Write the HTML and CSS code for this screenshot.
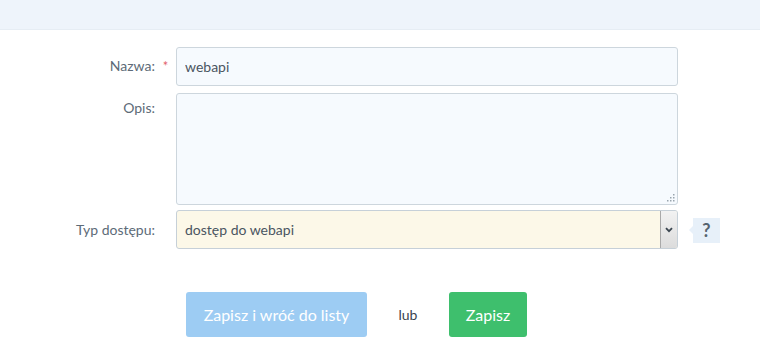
FILE: index.html
```html
<!DOCTYPE html>
<html lang="pl">
<head>
    <meta charset="UTF-8">
    <title>Edycja klucza</title>
    <link rel="stylesheet" href="styles.css">
</head>
<body>
    <div class="topbar"></div>

    <form class="form">
        <!-- nazwa -->
        <div class="row row-name">
            <label class="label">Nazwa:<span class="req">*</span></label>
            <input class="field" type="text" value="webapi">
        </div>

        <!-- opis -->
        <div class="row row-desc">
            <label class="label label-top">Opis:<span class="req"></span></label>
            <div class="area-wrap">
                <textarea class="field area"></textarea>
                <span class="grip">
                    <svg width="8" height="8" viewBox="0 0 8 8">
                        <rect x="6" y="0" width="1.5" height="1.5" fill="#9aa5ae"/>
                        <rect x="3" y="3" width="1.5" height="1.5" fill="#9aa5ae"/>
                        <rect x="6" y="3" width="1.5" height="1.5" fill="#9aa5ae"/>
                        <rect x="0" y="6" width="1.5" height="1.5" fill="#9aa5ae"/>
                        <rect x="3" y="6" width="1.5" height="1.5" fill="#9aa5ae"/>
                        <rect x="6" y="6" width="1.5" height="1.5" fill="#9aa5ae"/>
                    </svg>
                </span>
            </div>
        </div>

        <!-- typ dostepu -->
        <div class="row row-type">
            <label class="label">Typ dostępu:<span class="req"></span></label>
            <div class="select-wrap">
                <select class="field select">
                    <option>dostęp do webapi</option>
                </select>
                <span class="arrow">
                    <svg width="8" height="6" viewBox="0 0 8 6">
                        <path d="M1 1.2 L4 4.2 L7 1.2" fill="none" stroke="#3b4650" stroke-width="1.8"/>
                    </svg>
                </span>
            </div>
            <span class="help">?</span>
        </div>

        <div class="actions">
            <button type="button" class="btn btn-back">Zapisz i wróć do listy</button>
            <span class="or">lub</span>
            <button type="button" class="btn btn-save">Zapisz</button>
        </div>
    </form>
</body>
</html>
```

FILE: styles.css
```css
body {
    margin: 0;
    font-family: "Lato", "Open Sans", Arial, sans-serif;
    background: #fff;
    color: #4a5561;
}

.topbar {
    height: 29px;
    background: #eef4fb;
    border-bottom: 1px solid #e6edf4;
}

.form {
    padding-top: 17px;
}

.row {
    display: grid;
    grid-template-columns: 176px 502px auto;
    align-items: start;
}

.row-desc {
    margin-top: 7px;
}

.row-type {
    margin-top: 5px;
}

.label {
    display: flex;
    justify-content: flex-end;
    font-size: 14px;
    color: #5d6b78;
    line-height: 18px;
    padding-top: 10px;
}

.label-top {
    padding-top: 6px;
}

.row-type .label {
    padding-top: 11px;
}

.req {
    width: 21px;
    text-align: center;
    color: #e2636b;
    font-size: 13px;
}

.field {
    box-sizing: border-box;
    width: 502px;
    height: 39px;
    margin: 0;
    padding: 0 8px;
    font-family: inherit;
    font-size: 14px;
    color: #4a5561;
    background: #f6fafe;
    border: 1px solid #cdd6dd;
    border-radius: 3px;
    outline: none;
}

.area-wrap,
.select-wrap {
    position: relative;
    width: 502px;
}

.area {
    display: block;
    height: 112px;
    resize: none;
}

.grip {
    position: absolute;
    right: 3px;
    bottom: 3px;
    line-height: 0;
}

.select {
    appearance: none;
    -webkit-appearance: none;
    background: #fcf8e8;
    border-color: #c6d0d8;
}

.arrow {
    position: absolute;
    top: 1px;
    right: 1px;
    bottom: 1px;
    width: 16px;
    display: flex;
    align-items: center;
    justify-content: center;
    background: linear-gradient(#f2f2f2, #dcdcdc);
    border-left: 1px solid #a9a9a9;
    border-radius: 0 2px 2px 0;
}

.help {
    position: relative;
    margin: 8px 0 0 15px;
    width: 27px;
    height: 25px;
    background: #e7f0f9;
    color: #56636f;
    font-weight: bold;
    font-size: 18px;
    line-height: 25px;
    text-align: center;
}

.help::before {
    content: "";
    position: absolute;
    left: -4px;
    top: 8px;
    border-style: solid;
    border-width: 4px 4px 4px 0;
    border-color: transparent #e7f0f9 transparent transparent;
}

.actions {
    display: flex;
    align-items: center;
    margin: 43px 0 0 186px;
}

.btn {
    height: 45px;
    border: none;
    border-radius: 3px;
    color: #fff;
    font-family: inherit;
    font-size: 16px;
    cursor: pointer;
}

.btn-back {
    width: 181px;
    background: #9dccf3;
}

.btn-save {
    width: 78px;
    background: #3ebf6d;
}

.or {
    width: 82px;
    text-align: center;
    font-size: 14px;
    color: #3a4550;
}
```
